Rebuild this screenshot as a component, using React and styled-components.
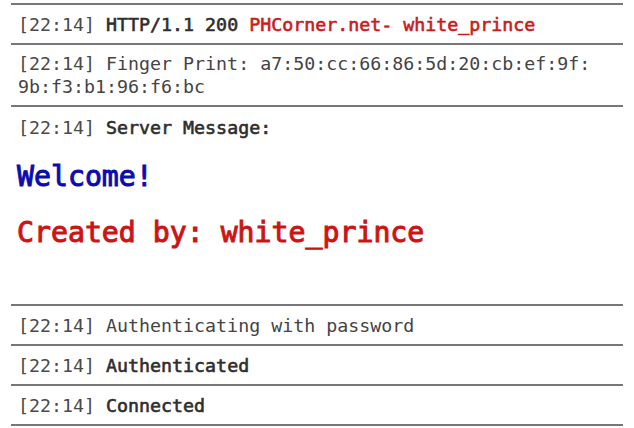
import React from 'react'
import styled, { createGlobalStyle } from 'styled-components'

const GlobalStyle = createGlobalStyle`
  body {
    margin: 0;
    background: #fff;
    font-family: "DejaVu Sans Mono", "Liberation Mono", monospace;
  }
`

const Log = styled.div`
  padding: 3px 11px 0;
  width: 612px;
`

const Entry = styled.div`
  border-top: 2px solid #777;
  padding: ${p => p.$pad || '8px 7px 7px'};
  font-size: 18.3px;
  line-height: 23px;
  color: #444;
  &:last-child {
    border-bottom: 2px solid #777;
  }
`

const Stamp = styled.span`
  color: #4a4a4a;
`

/* fake bold like the phone's monospace font: thicker strokes, same widths */
const Msg = styled.span`
  color: ${p => p.$red ? '#cc1a1a' : '#2e2e2e'};
  -webkit-text-stroke: ${p => p.$bold ? '0.6px currentColor' : '0'};
`

const Banner = styled.div`
  margin: ${p => p.$first ? '10px' : '0'} 0 0 -1px;
  font-size: 28.2px;
  line-height: 56px;
  -webkit-text-stroke: 1px currentColor;
  color: ${p => p.$tone === 'blue' ? '#0c0cae' : '#cc1414'};
`

const Spacer = styled.div`
  height: 36px;
`

const T = '[22:14]'

export default function App() {
  return (
    <>
      <GlobalStyle />
      <Log>
        <Entry>
          <Stamp>{T}</Stamp> <Msg $bold>HTTP/1.1 200</Msg> <Msg $bold $red>PHCorner.net- white_prince</Msg>
        </Entry>
        <Entry $pad="7px 7px 7px">
          <Stamp>{T}</Stamp> Finger Print: a7:50:cc:66:86:5d:20:cb:ef:9f:<br />
          9b:f3:b1:96:f6:bc
        </Entry>
        <Entry $pad="9px 7px 7px">
          <Stamp>{T}</Stamp> <Msg $bold>Server Message:</Msg>
          <Banner $first $tone="blue">Welcome!</Banner>
          <Banner $tone="red">Created by: white_prince</Banner>
          <Spacer />
        </Entry>
        <Entry>
          <Stamp>{T}</Stamp> Authenticating with password
        </Entry>
        <Entry>
          <Stamp>{T}</Stamp> <Msg $bold>Authenticated</Msg>
        </Entry>
        <Entry>
          <Stamp>{T}</Stamp> <Msg $bold>Connected</Msg>
        </Entry>
      </Log>
    </>
  )
}
